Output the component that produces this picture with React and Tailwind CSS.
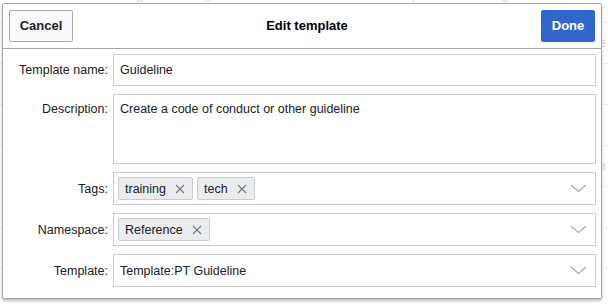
import React from 'react';

const fields = [
    { label: 'Tags:', chips: ['training', 'tech'] },
    { label: 'Namespace:', chips: ['Reference'] },
];

const CloseIcon = () => (
    <svg width="10" height="10" viewBox="0 0 10 10" className="shrink-0">
        <path d="M1 1L9 9M9 1L1 9" stroke="#72777d" strokeWidth="1.1" fill="none" />
    </svg>
);

const Chevron = () => (
    <svg width="17" height="9" viewBox="0 0 17 9" className="shrink-0 ml-auto">
        <polyline points="1,1 8.5,7.5 16,1" stroke="#a2a9b1" strokeWidth="1.1" fill="none" />
    </svg>
);

const Chip = ({ text }) => (
    <div className="flex items-center gap-[9px] h-[23px] pl-[6px] pr-[7px] bg-[#eaecf0] border border-[#c8ccd1] rounded-[2px] text-[#202122]">
        <span>{text}</span>
        <CloseIcon />
    </div>
);

const Label = ({ children, className = '' }) => (
    <div className={`text-right pr-[5px] text-[#202122] ${className}`}>{children}</div>
);

const App = () => {
    return (
        <div className="relative w-[608px] h-[305px] overflow-hidden bg-white font-['Liberation_Sans',Arial,sans-serif]">
            {/* page behind the dialog */}
            <div className="-mt-[13px] text-[13px] leading-[16px]">
                <div className="flex h-[16px] whitespace-nowrap">
                    <span className="pl-[3px] w-[190px] text-[#d3cfec]">Create minutes for a regular ...</span>
                    <span className="w-[197px] text-[#d8dadd]">Tag</span>
                    <span className="w-[195px] text-[#cfd5f0]">Template:PT Meeting minut...</span>
                    <span className="text-[#d3cfec]">Mee</span>
                </div>
                <div className="h-[20px] border-b border-[#eaecf0]" />
                {[0, 1, 2, 3, 4, 5].map((i) => (
                    <div key={i} className="h-[41px] border-b border-[#eaecf0] flex items-center justify-end pr-[2px] text-[#d0d3d8]">
                        {i === 0 || i === 3 ? 'ie' : ''}
                    </div>
                ))}
            </div>

            {/* dialog */}
            <div className="absolute left-[2px] top-[3px] w-[600px] h-[296px] bg-white border border-[#a2a9b1] rounded-[2px] shadow-[0_2px_3px_rgba(0,0,0,0.25)] flex flex-col">
                <div className="flex items-center h-[45px] px-[6px] border-b border-[#a2a9b1]">
                    <button className="h-[32px] w-[64px] bg-[#f8f9fa] border border-[#a2a9b1] rounded-[2px] text-[13px] font-bold text-[#202122]">
                        Cancel
                    </button>
                    <div className="flex-1 text-center text-[13px] font-bold text-black">Edit template</div>
                    <button className="h-[32px] w-[54px] bg-[#3366cc] border border-[#3366cc] rounded-[2px] text-[13px] font-bold text-white">
                        Done
                    </button>
                </div>

                <div className="grid grid-cols-[110px_483px] gap-y-[8px] pt-[5px] text-[12.5px] leading-[16px]">
                    <Label className="self-center">Template name:</Label>
                    <div className="h-[32px] border border-[#c8ccd1] flex items-center px-[6px] text-[#202122]">Guideline</div>

                    <Label className="pt-[7px]">Description:</Label>
                    <div className="h-[70px] border border-[#c8ccd1] px-[6px] pt-[6px] text-[#202122]">
                        Create a code of conduct or other guideline
                    </div>

                    {fields.map((f) => (
                        <React.Fragment key={f.label}>
                            <Label className="self-center">{f.label}</Label>
                            <div className="h-[33px] border border-[#c8ccd1] flex items-center gap-[4px] pl-[4px] pr-[8px]">
                                {f.chips.map((c) => (
                                    <Chip key={c} text={c} />
                                ))}
                                <Chevron />
                            </div>
                        </React.Fragment>
                    ))}

                    <Label className="self-center">Template:</Label>
                    <div className="h-[33px] border border-[#c8ccd1] flex items-center pl-[6px] pr-[8px] text-[#202122]">
                        <span>Template:PT Guideline</span>
                        <Chevron />
                    </div>
                </div>
            </div>
        </div>
    );
};

export default App;
